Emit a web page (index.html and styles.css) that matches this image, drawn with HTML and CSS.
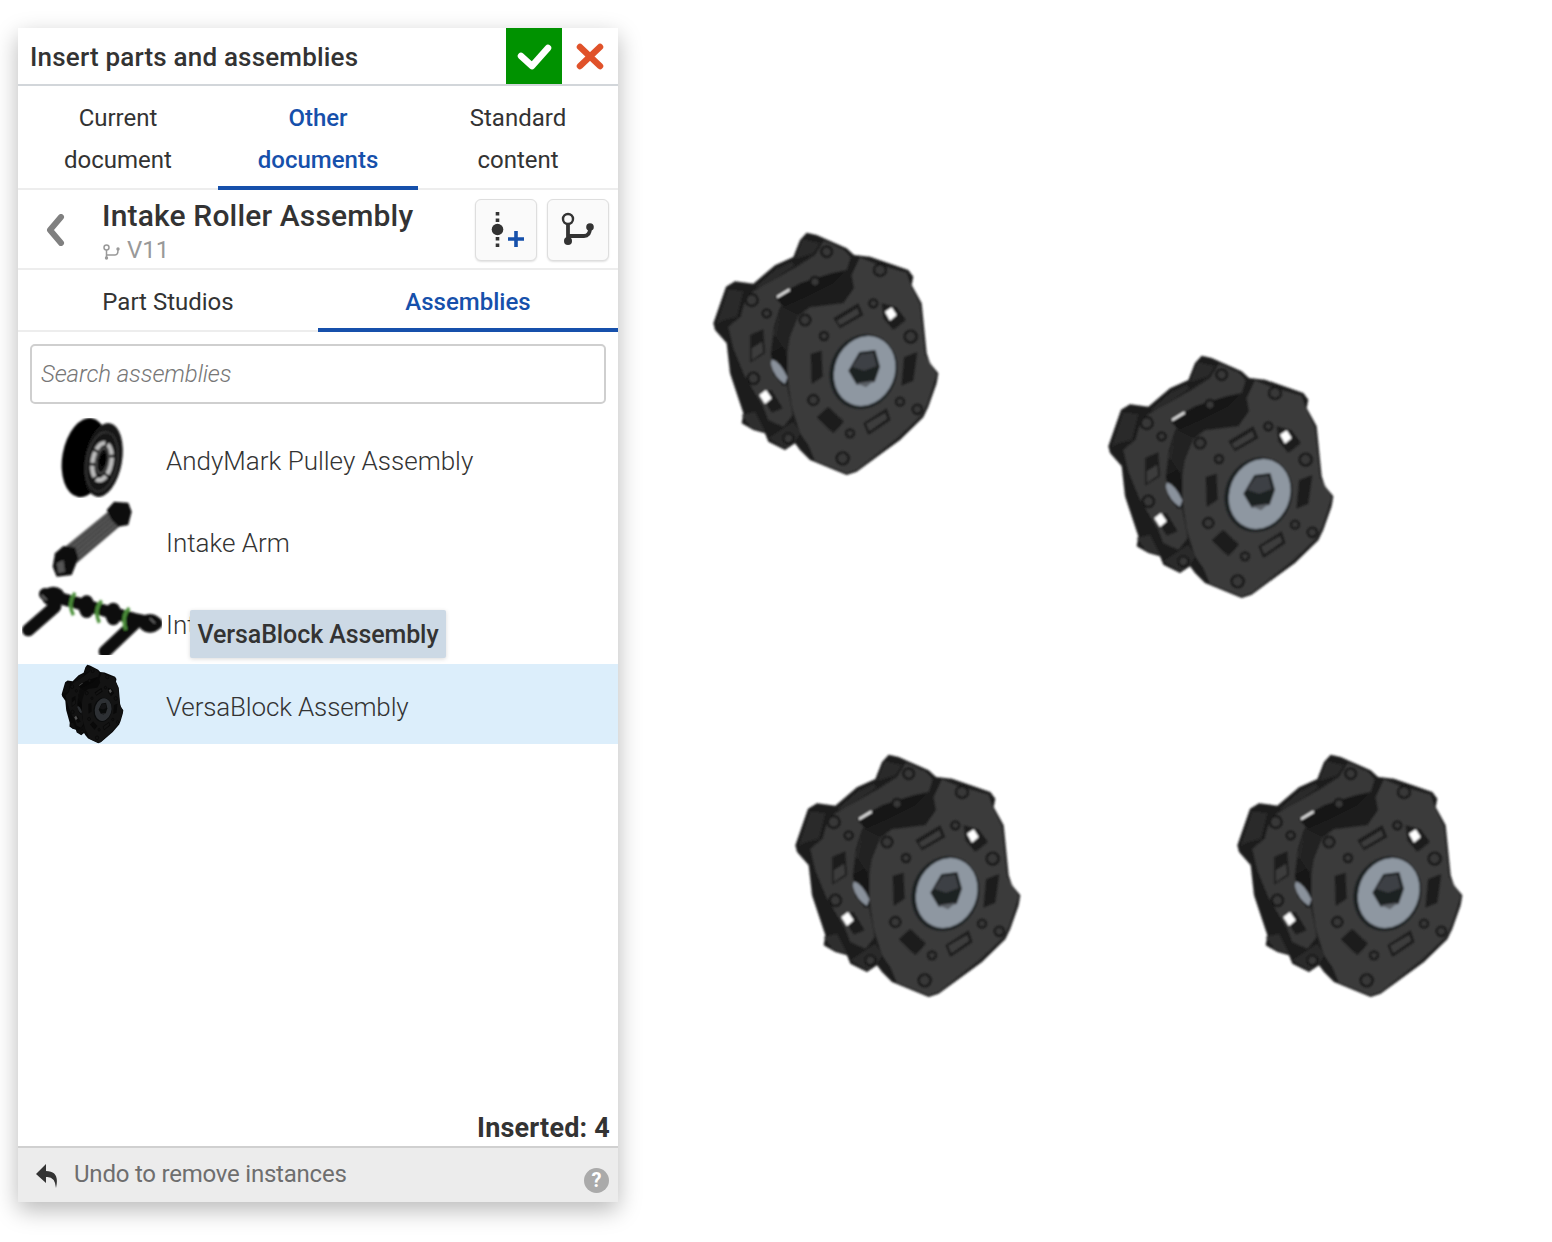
FILE: index.html
```html
<!DOCTYPE html>
<html lang="en">
<head>
<meta charset="utf-8">
<title>Insert parts and assemblies</title>
<link rel="stylesheet" href="styles.css">
</head>
<body>
<svg class="defs" width="0" height="0" aria-hidden="true">
  <defs>
    <filter id="soft" x="-5%" y="-5%" width="110%" height="110%"><feGaussianBlur stdDeviation="3"/></filter>
    <filter id="softer" x="-5%" y="-5%" width="110%" height="110%"><feGaussianBlur stdDeviation="2.4"/></filter>
    <g id="part" filter="url(#soft)">
      <path fill="#1d1d1d" d="M320 38L350 45L440 85L462 105L510 110L625 150L640 170L635 195L665 250L680 400L690 430L715 460L710 490L685 560L670 592L600 660L470 755L440 765L330 720L300 690L285 670L255 690L205 665L195 640L160 630L125 610L130 580L90 460L80 370L45 330L40 310L78 200L105 184L160 191L225 136L280 111L300 60Z"/>
      <path fill="#2c2c2c" d="M50 312L85 208L130 214L118 262L110 290L72 300Z"/>
      <path fill="#2c2c2c" d="M170 198L230 146L275 125L285 135L180 205Z"/>
      <path fill="#2c2c2c" d="M285 118L308 58L360 70L340 100Z"/>
      <path fill="#383838" d="M122 290L140 225L290 140L345 105L372 62L432 90L452 112L440 150L300 215L240 262L222 320L212 400L262 500L278 585L250 620L205 600L190 560L135 470L100 385L85 320Z"/>
      <path fill="#171717" d="M225 232L300 190L395 160L440 150L400 190L310 235L250 260Z"/>
      <path fill="#161616" d="M212 400L255 375L270 490L250 498L222 465Z"/>
      <path fill="#8a929c" d="M215 418Q240 425 262 472L255 492Q222 472 213 432Z"/>
      <path fill="#3a3a3a" d="M295 288L330 262L430 250L462 205L455 165L480 112L520 128L620 158L632 195L660 255L675 405L710 462L700 495L680 555L665 585L595 652L470 750L440 760L345 722L325 675L300 640L275 560L262 470L262 370L222 345L245 262Z"/>
      <path fill="#2b2b2b" d="M205 655L280 605L302 640L285 665L255 685Z"/>
      <path fill="#2e2e2e" d="M125 585L165 575L195 635L155 625Z"/>
      <path fill="#242424" d="M225 345L245 262L295 288L270 350L262 400Z"/>
      <g fill="#1a1a1a">
        <path d="M150 345L190 328L195 400L150 428Z"/>
        <path d="M332 402L365 392L368 470L335 492Z"/>
        <path d="M400 295L475 250L490 285L420 325Z"/>
        <path d="M612 412L652 396L640 482L604 497Z"/>
        <path d="M350 592L385 560L432 605L400 640Z"/>
        <path d="M490 610L560 565L572 600L505 645Z"/>
        <path d="M545 250L590 262L618 300L580 330L550 295Z"/>
        <path d="M180 520L215 510L248 565L215 578Z"/>
      </g>
      <g fill="#3c3c3c">
        <path d="M410 302L472 264L478 282L420 316Z"/>
        <path d="M498 612L556 578L562 596L508 634Z"/>
        <path d="M155 385L186 365L190 396L156 420Z"/>
      </g>
      <g fill="#383838" stroke="#161616" stroke-width="7">
        <circle cx="380" cy="95" r="16"/><circle cx="155" cy="240" r="18"/><circle cx="345" cy="185" r="14"/>
        <circle cx="315" cy="300" r="16"/><circle cx="372" cy="348" r="12"/><circle cx="520" cy="250" r="12"/>
        <circle cx="632" cy="350" r="18"/><circle cx="340" cy="540" r="15"/><circle cx="600" cy="545" r="12"/>
        <circle cx="652" cy="568" r="14"/><circle cx="450" cy="640" r="12"/><circle cx="428" cy="715" r="18"/>
        <circle cx="160" cy="475" r="17"/><circle cx="200" cy="280" r="12"/><circle cx="540" cy="150" r="18"/>
        <circle cx="265" cy="655" r="15"/>
      </g>
      <path fill="#fff" d="M555 275L575 262L590 285L570 302Z"/>
      <path fill="#fff" d="M178 525L198 510L215 535L195 552Z"/>
      <path fill="#e8e8e8" d="M230 228L268 205L270 212L232 235Z"/>
      <ellipse cx="490" cy="455" rx="100" ry="114" fill="#1c2024" transform="rotate(22 490 455)"/>
      <ellipse cx="494" cy="453" rx="90" ry="107" fill="#8e97a1" transform="rotate(22 494 453)"/>
      <path fill="#1f2124" d="M478 396L526 390L540 440L524 486L470 494L445 452Z"/>
      <path fill="#5b6066" d="M470 490L522 482L498 502Z"/>
      <path fill="#3d4044" d="M482 403L520 398L530 438L492 452L456 440Z"/>
    </g>
  </defs>
</svg>

<section class="panel">
  <header class="head">
    <h1 class="title">Insert parts and assemblies</h1>
    <button class="ok" aria-label="Accept">
      <svg width="56" height="56" viewBox="0 0 56 56"><path d="M15 28L26 38L42 20" fill="none" stroke="#fff" stroke-width="6.5" stroke-linecap="round" stroke-linejoin="round"/></svg>
    </button>
    <button class="cancel" aria-label="Cancel">
      <svg width="56" height="56" viewBox="0 0 56 56"><path d="M18 19L38 38M38 19L18 38" fill="none" stroke="#e0522a" stroke-width="6.5" stroke-linecap="round"/></svg>
    </button>
  </header>

  <nav class="tabs">
    <div class="tab">Current<br>document</div>
    <div class="tab on">Other<br>documents</div>
    <div class="tab">Standard<br>content</div>
  </nav>

  <div class="doc">
    <svg class="back" width="20" height="32" viewBox="0 0 20 32"><path d="M15 3L4 16L15 29" fill="none" stroke="#808080" stroke-width="6" stroke-linecap="round" stroke-linejoin="round"/></svg>
    <div class="doc-text">
      <div class="doc-name">Intake Roller Assembly</div>
      <div class="doc-ver">
        <svg width="18" height="16" viewBox="0 0 18 16"><g fill="none" stroke="#999" stroke-width="1.5"><circle cx="3.5" cy="3.5" r="2.5"/><path d="M3.5 6V14M3.5 11H12Q15 11 15 6"/></g><circle cx="15" cy="5" r="1.7" fill="#999"/><circle cx="3.5" cy="14" r="1.7" fill="#999"/></svg>
        <span>V11</span>
      </div>
    </div>
    <button class="tool" aria-label="Create version">
      <svg width="60" height="60" viewBox="0 0 60 60"><path d="M21.5 12V22M21.5 37V47" stroke="#333" stroke-width="3.6" stroke-dasharray="3.5 3" fill="none"/><circle cx="21.5" cy="29.5" r="5.8" fill="#333"/><path d="M40 31V47M32 39H48" stroke="#1650ab" stroke-width="3.6" fill="none"/></svg>
    </button>
    <button class="tool" aria-label="Branches">
      <svg width="60" height="60" viewBox="0 0 60 60"><circle cx="20" cy="19" r="5" fill="none" stroke="#333" stroke-width="2.4"/><path d="M20 24V41M20 36H36Q42 36 42 28" fill="none" stroke="#333" stroke-width="3.8"/><circle cx="20" cy="41" r="4" fill="#333"/><circle cx="42" cy="27" r="3.8" fill="#333"/></svg>
    </button>
  </div>

  <nav class="subtabs">
    <div class="subtab">Part Studios</div>
    <div class="subtab on">Assemblies</div>
  </nav>

  <div class="search">Search assemblies</div>

  <ul class="list">
    <li class="row">
      <svg class="thumb" viewBox="36 24 420 240">
        <g filter="url(#softer)">
          <ellipse cx="225" cy="143" rx="68" ry="120" transform="rotate(10 225 143)" fill="#060606"/>
          <ellipse cx="280" cy="150" rx="56" ry="112" transform="rotate(10 280 150)" fill="#161616"/>
          <ellipse cx="276" cy="155" rx="46" ry="90" transform="rotate(10 276 155)" fill="none" stroke="#3a3a3a" stroke-width="4"/>
          <ellipse cx="276" cy="155" rx="28" ry="56" transform="rotate(10 276 155)" fill="none" stroke="#bdbdbd" stroke-width="13" stroke-dasharray="34 8"/>
          <ellipse cx="277" cy="152" rx="17" ry="38" transform="rotate(10 277 152)" fill="#111" stroke="#666" stroke-width="3"/>
          <ellipse cx="279" cy="150" rx="8" ry="18" transform="rotate(10 279 150)" fill="#000"/>
        </g>
      </svg>
      <span class="name">AndyMark Pulley Assembly</span>
    </li>
    <li class="row">
      <svg class="thumb" viewBox="36 270 420 240">
        <g filter="url(#softer)">
          <path fill="#565656" d="M165 410L300 300L340 340L200 460Z"/>
          <path d="M172 416L308 306M180 424L315 313M188 432L322 320M196 440L330 328M204 448L338 336" stroke="#222" stroke-width="2.5" fill="none"/>
          <path fill="#0d0d0d" d="M135 430L160 408L195 412L205 445L185 495L140 500L128 470Z"/>
          <path fill="#0d0d0d" d="M290 300L312 275L355 278L365 305L355 345L325 350L305 330Z"/>
          <path fill="#555" d="M140 460L160 450L165 485L145 490Z"/>
        </g>
      </svg>
      <span class="name">Intake Arm</span>
    </li>
    <li class="row">
      <svg class="thumb" viewBox="36 516 420 240">
        <g filter="url(#softer)">
          <path d="M55 660L135 590" fill="none" stroke="#0a0a0a" stroke-width="38" stroke-linecap="round"/>
          <path d="M285 725L385 630" fill="none" stroke="#0a0a0a" stroke-width="38" stroke-linecap="round"/>
          <path d="M105 552L150 565L385 630L440 640" fill="none" stroke="#0a0a0a" stroke-width="36" stroke-linecap="round"/>
          <g fill="#0a0a0a"><ellipse cx="230" cy="590" rx="24" ry="34"/><ellipse cx="310" cy="612" rx="24" ry="34"/><ellipse cx="130" cy="560" rx="34" ry="30"/><ellipse cx="420" cy="640" rx="34" ry="28"/></g>
          <g fill="none" stroke="#4c8f3a" stroke-width="10"><path d="M195 548Q172 580 190 616"/><path d="M275 572Q250 600 268 638"/><path d="M358 594Q332 620 348 660"/></g>
          <path d="M95 555L110 570M420 625L435 640" stroke="#777" stroke-width="4"/>
        </g>
      </svg>
      <span class="name">Intake Rollers</span>
    </li>
    <li class="row sel">
      <svg class="thumb" viewBox="36 762 420 240">
        <g class="thumb-part" transform="translate(144 752) scale(.274 .324)"><use href="#part"/></g>
      </svg>
      <span class="name">VersaBlock Assembly</span>
    </li>
  </ul>

  <div class="tooltip">VersaBlock Assembly</div>

  <div class="inserted">Inserted: 4</div>

  <footer class="foot">
    <svg class="undo" width="24" height="26" viewBox="0 0 24 26"><path fill="#333" d="M11 1L1 11L11 20V14Q20 13 21 25Q25 8 11 8Z"/></svg>
    <span class="hint">Undo to remove instances</span>
    <span class="help">?</span>
  </footer>
</section>

<svg class="part p1" viewBox="0 0 750 780"><use href="#part"/></svg>
<svg class="part p2" viewBox="0 0 750 780"><use href="#part"/></svg>
<svg class="part p3" viewBox="0 0 750 780"><use href="#part"/></svg>
<svg class="part p4" viewBox="0 0 750 780"><use href="#part"/></svg>
</body>
</html>
```
FILE: styles.css
```css
* { box-sizing: border-box; }
html, body { margin: 0; height: 100%; background: #fff; }
body {
  position: relative;
  width: 1552px;
  height: 1242px;
  overflow: hidden;
  padding: 28px 0 0 18px;
  font-family: Roboto, "Liberation Sans", sans-serif;
  color: #333;
}
.defs { position: absolute; }
button { border: 0; padding: 0; background: none; display: block; }
svg { display: block; }

.panel {
  position: relative;
  width: 600px;
  height: 1174px;
  display: flex;
  flex-direction: column;
  background: #fff;
  box-shadow: 0 8px 22px rgba(0, 0, 0, .28);
}
.head {
  height: 58px;
  flex: none;
  display: flex;
  border-bottom: 2px solid #d2d6da;
  padding-left: 12px;
}
.title { flex: 1; margin: 0; font-size: 26px; font-weight: 500; line-height: 58px; letter-spacing: .19px; }
.ok { width: 56px; height: 56px; background: #009200; }
.cancel { width: 56px; height: 56px; }

.tabs { height: 104px; flex: none; display: flex; border-bottom: 2px solid #ededed; }
.tab {
  flex: 1;
  height: 104px;
  padding-top: 11px;
  text-align: center;
  font-size: 24px;
  line-height: 42px;
}
.tab.on { color: #1650ab; font-weight: 500; border-bottom: 4px solid #1650ab; }

.doc {
  height: 80px;
  flex: none;
  display: flex;
  align-items: flex-start;
  padding: 8px 9px 0 28px;
  gap: 10px;
  border-bottom: 2px solid #ededed;
}
.back { margin-top: 16px; }
.doc-text { flex: 1; padding-left: 26px; }
.doc-name { margin-bottom: 1px; font-size: 30px; font-weight: 500; line-height: 36px; letter-spacing: .16px; }
.doc-ver { display: flex; align-items: center; gap: 6px; padding-left: 1px; color: #999; font-size: 24px; line-height: 30px; }
.doc-ver svg { margin-top: 4px; }
.tool {
  width: 62px;
  height: 62px;
  margin-top: 1px;
  border: 1px solid #dedede;
  border-radius: 6px;
  background: #fafafa;
  box-shadow: 0 1px 2px rgba(0, 0, 0, .12);
}

.subtabs { height: 62px; flex: none; display: flex; border-bottom: 2px solid #ededed; }
.subtab { flex: 1; height: 62px; text-align: center; font-size: 24px; line-height: 64px; }
.subtab.on { color: #1650ab; font-weight: 500; border-bottom: 4px solid #1650ab; }

.search {
  flex: none;
  height: 60px;
  margin: 12px 12px 0;
  padding-left: 9px;
  border: 2px solid #cfcfcf;
  border-radius: 5px;
  font-size: 24px;
  font-style: italic;
  font-weight: 300;
  letter-spacing: -.12px;
  line-height: 56px;
  color: #777;
}

.list { list-style: none; margin: 14px 0 0; padding: 0; display: flex; flex-direction: column; gap: 2px; }
.row { height: 80px; display: flex; align-items: center; padding-left: 4px; gap: 4px; }
.row.sel { background: #dceefb; }
.thumb { width: 140px; height: 80px; flex: none; overflow: hidden; }
.thumb-part { filter: brightness(.32); }
.name { margin-top: 6px; font-size: 26px; font-weight: 300; color: #333; }
.sel .name { letter-spacing: -.15px; }

.tooltip {
  position: absolute;
  left: 172px;
  top: 582px;
  width: 256px;
  height: 48px;
  background: #ccd9e5;
  border-radius: 2px;
  box-shadow: 0 1px 4px rgba(0, 0, 0, .15);
  font-size: 25px;
  font-weight: 500;
  letter-spacing: -.1px;
  line-height: 50px;
  text-align: center;
}

.inserted {
  margin-top: auto;
  padding-right: 8px;
  text-align: right;
  font-size: 27px;
  font-weight: 700;
  letter-spacing: .2px;
  line-height: 34px;
  margin-bottom: 1px;
}
.foot {
  position: relative;
  height: 56px;
  flex: none;
  display: flex;
  align-items: flex-start;
  padding: 9px 0 0 17px;
  gap: 15px;
  background: #ececec;
  border-top: 2px solid #d0d0d0;
}
.undo { margin-top: 6px; }
.hint { font-size: 24px; line-height: 34px; color: #6e6e6e; letter-spacing: -.22px; }
.help {
  position: absolute;
  right: 9px;
  top: 20px;
  width: 25px;
  height: 25px;
  border-radius: 50%;
  background: #aaa;
  color: #fff;
  font-size: 20px;
  font-weight: 700;
  line-height: 25px;
  text-align: center;
}

.part { position: absolute; width: 250px; height: 260px; }
.p1 { left: 700px; top: 220px; }
.p2 { left: 1095px; top: 343px; }
.p3 { left: 782px; top: 742px; }
.p4 { left: 1224px; top: 742px; }
```
